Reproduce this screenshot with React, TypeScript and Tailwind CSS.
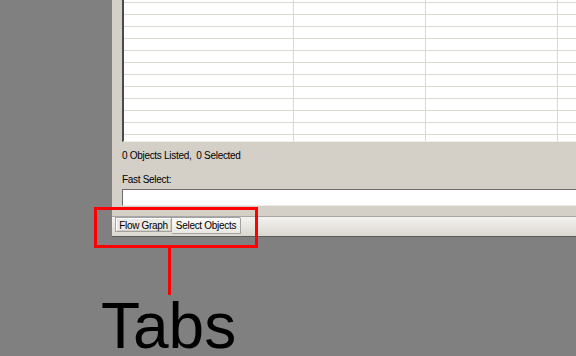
import React from "react";

const rowHeights = [3, 12, 12, 12, 12, 12, 12, 12, 12, 12, 12, 12, 6];

const ListRow: React.FC<{ h: number; last: boolean }> = ({ h, last }) => (
  <div
    className={`flex ${last ? "" : "border-b border-[#dbd8d1]"}`}
    style={{ height: h }}
  >
    <div className="w-[170px] shrink-0 border-r border-[#dcd9d3]" />
    <div className="w-[132px] shrink-0 border-r border-[#dcd9d3]" />
    <div className="w-[132px] shrink-0 border-r border-[#dcd9d3]" />
    <div className="flex-1" />
  </div>
);

const App: React.FC = () => {
  return (
    <div
      className="relative h-[356px] w-[576px] overflow-hidden bg-[#808080]"
      style={{ fontFamily: '"Liberation Sans", Arial, sans-serif' }}
    >
      {/* Window panel */}
      <div className="ml-[112px] bg-[#d4d0c8]">
        {/* Object list */}
        <div className="ml-[10px] border-l-2 border-l-[#4a4a4a] border-b border-b-[#efeee9] bg-white">
          {rowHeights.map((h, i) => (
            <ListRow key={i} h={h} last={i === rowHeights.length - 1} />
          ))}
        </div>

        {/* Status + fast select */}
        <div className="pl-[10px] text-[10px] leading-[12px] tracking-[-0.3px] text-black">
          <p className="mt-[8px] whitespace-pre">0 Objects Listed,  0 Selected</p>
          <p className="mt-[12px]">Fast Select:</p>
          <div className="mt-[3px] h-[17px] border-t border-l border-[#6b6b6b] border-b border-b-[#ecebe6] bg-white" />
        </div>

        {/* Tab strip */}
        <div className="mt-[10px] flex h-[21px] items-start border-t border-t-[#a6a6a6] border-b border-b-[#5c5c5c] bg-gradient-to-b from-[#f4f3f0] to-[#dbd7cf] pl-[3px] text-[10px] tracking-[-0.3px] text-black">
          <div className="flex h-[15px] w-[57px] items-center justify-center border border-[#a2a2a2] bg-[#ebe9e3] pt-[1px] shadow-[inset_1px_1px_0_#ffffff,inset_-1px_-1px_0_#d0cdc5]">
            Flow Graph
          </div>
          <div className="flex h-[17px] w-[69px] items-center justify-center rounded-tr-[2px] border border-l-0 border-[#a2a2a2] bg-gradient-to-b from-[#fbfbfa] to-[#e9e7e1]">
            Select Objects
          </div>
        </div>
      </div>

      {/* Annotation */}
      <p className="ml-[101px] mt-[64px] text-[64px] leading-[50px] text-black">Tabs</p>
      <div className="absolute left-[94px] top-[207px] h-[41px] w-[164px] border-[3px] border-[#ff0000]" />
      <div className="absolute left-[168px] top-[248px] h-[47px] w-[3px] bg-[#ff0000]" />
    </div>
  );
};

export default App;
